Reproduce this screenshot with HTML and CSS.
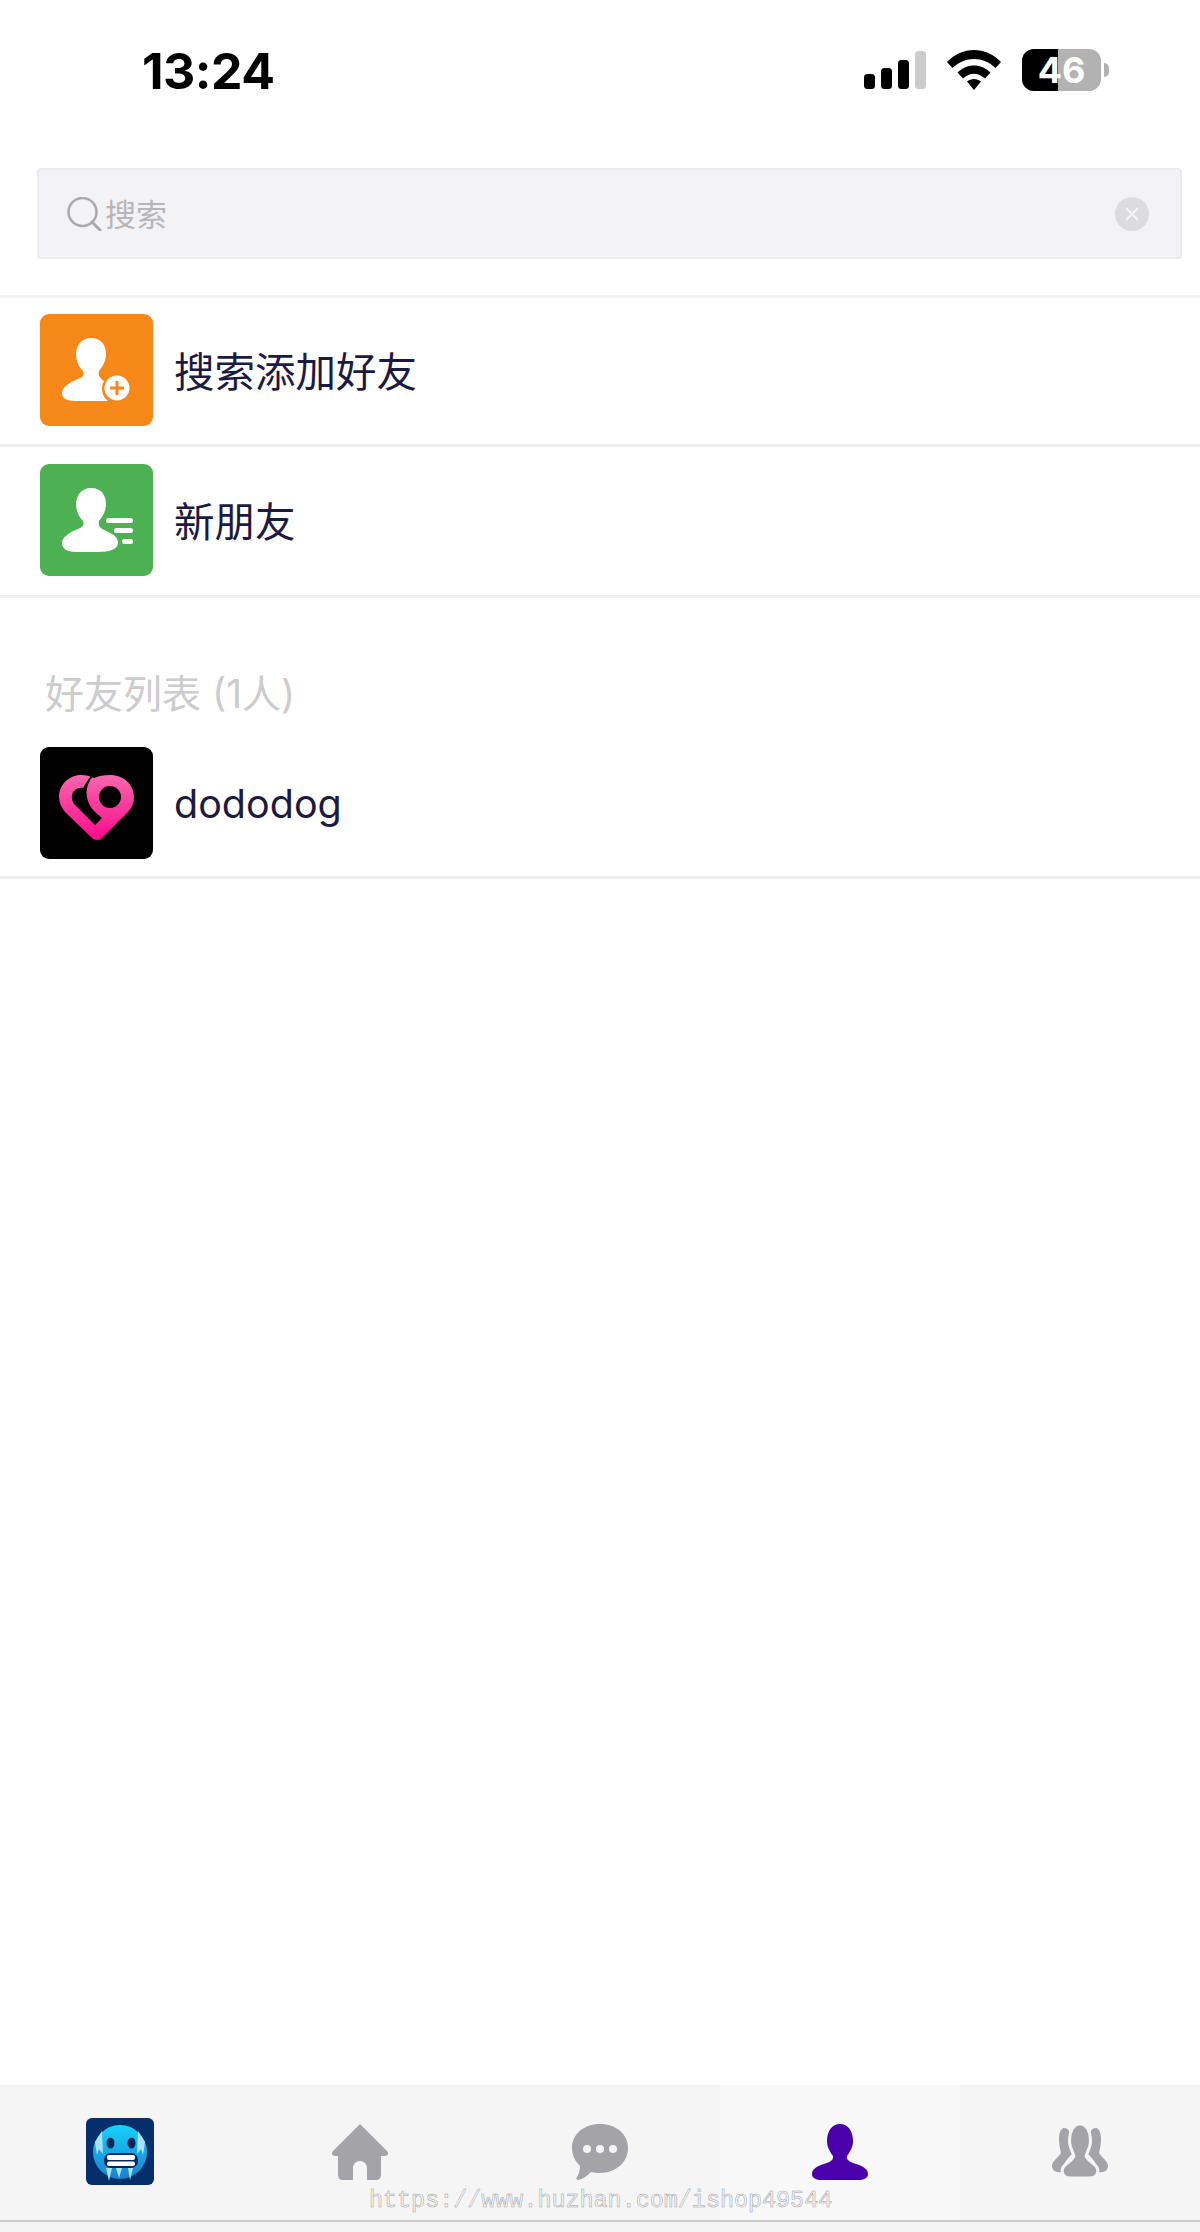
FILE: index.html
```html
<!DOCTYPE html>
<html lang="zh-CN">
<head>
  <meta charset="UTF-8" />
  <meta name="viewport" content="width=device-width, initial-scale=1.0"/>
  <title>好友</title>
  <link rel="stylesheet" href="styles.css">
</head>
<body>
  <div class="page">
    <!-- status bar -->
    <div class="status-bar">
      <div class="time">13:24</div>
      <div class="status-icons">
        <svg class="signal" width="62" height="38" viewBox="0 0 62 38">
          <rect x="0" y="23" width="11" height="15" rx="3.5" fill="#000"/>
          <rect x="17" y="17" width="11" height="21" rx="3.5" fill="#000"/>
          <rect x="34" y="9" width="11" height="29" rx="3.5" fill="#000"/>
          <rect x="51" y="0" width="11" height="38" rx="3.5" fill="#cbcbcb"/>
        </svg>
        <svg class="wifi" width="54" height="40" viewBox="0 0 54 40">
          <path d="M0 12 C15 -4 39 -4 54 12 L48.500 18 C36 6 18 6 5.500 18 Z" fill="#000"/>
          <path d="M10.500 22.500 C20 13 34 13 43.500 22.500 L38 28.500 C31 22 23 22 16 28.500 Z" fill="#000"/>
          <path d="M20 31.500 C24 28 30 28 34 31.500 L27 40 Z" fill="#000"/>
        </svg>
        <div class="battery">
          <div class="battery-body">
            <div class="battery-fill"></div>
            <span class="battery-num">46</span>
          </div>
          <div class="battery-nub"></div>
        </div>
      </div>
    </div>

    <!-- search -->
    <div class="search-wrap">
      <div class="search-box">
        <svg class="search-icon" width="35" height="34" viewBox="0 0 35 34">
          <circle cx="15.500" cy="15" r="14" fill="none" stroke="#a9a9ac" stroke-width="2.500"/>
          <path d="M25 25 L33 33" stroke="#a9a9ac" stroke-width="3" stroke-linecap="round"/>
        </svg>
        <span class="search-text">搜索</span>
        <svg class="clear-icon" width="34" height="34" viewBox="0 0 34 34">
          <circle cx="17" cy="17" r="17" fill="#dcdcde"/>
          <path d="M11 11 L23 23 M23 11 L11 23" stroke="#f4f4f5" stroke-width="2"/>
        </svg>
      </div>
    </div>

    <!-- fixed rows -->
    <div class="row row-first">
      <div class="avatar avatar-orange">
        <svg width="113" height="112" viewBox="0 0 113 112">
          <path d="M51 24 C62 24 66 32 66 40 C66 48 62 53 59 57 C58 62 60 64 64 67 C60 74 62 82 68 87 L36 87 C26 87 22 84 22 79 C22 73 30 68 38 65 C44 63 44 60 43 57 C39 53 36 47 36 40 C36 32 41 24 51 24 Z" fill="#fff"/>
          <circle cx="77" cy="74" r="12.500" fill="#fff"/>
          <path d="M77 67 L77 81 M70 74 L84 74" stroke="#f58819" stroke-width="3"/>
        </svg>
      </div>
      <span class="row-name">搜索添加好友</span>
    </div>
    <div class="row">
      <div class="avatar avatar-green">
        <svg width="113" height="113" viewBox="0 0 113 113">
          <path d="M51 24 C62 24 66 32 66 40 C66 48 62 53 59 57 C58 62 60 64 66 67 C74 70 78 74 78 79 C78 85 70 88 58 88 L36 88 C26 88 22 84 22 79 C22 73 30 68 38 65 C44 63 44 60 43 57 C39 53 36 47 36 40 C36 32 41 24 51 24 Z" fill="#fff"/>
          <rect x="66" y="54" width="27" height="5" rx="2.500" fill="#fff"/>
          <rect x="74" y="64" width="19" height="5" rx="2.500" fill="#fff"/>
          <rect x="82" y="75" width="11" height="5" rx="2.500" fill="#fff"/>
        </svg>
      </div>
      <span class="row-name">新朋友</span>
    </div>

    <div class="section-title">好友列表 (1人)</div>

    <div class="row row-friend">
      <div class="avatar avatar-black">
        <svg width="113" height="112" viewBox="0 0 113 112">
          <defs>
            <linearGradient id="heart" x1="0" y1="0" x2="0" y2="1">
              <stop offset="0" stop-color="#fb66ae"/>
              <stop offset="1" stop-color="#fb0a8a"/>
            </linearGradient>
          </defs>
          <path d="M57 93 C54.500 93 52.500 92 51 90 L25 65 C21 60 19 55 19 50 C19 38 29 28 41 28 C46 28 50 29 54 31 C58 29 64 28 70 28 C84 28 94 38 94 50 C94 56 92 61 88 65 L63 90 C61.500 92 59.500 93 57 93 Z" fill="url(#heart)"/>
          <path d="M55 27 C50 32 47 38 46.500 45 C46.500 53 50 60 55 65 L62 71 L55 78 L35 58 C31 54 31 47 34 44 C37 41 40 40.500 43 41 C45 37 48 33 52 27 Z" fill="#000"/>
          <circle cx="70" cy="50" r="11" fill="#000"/>
        </svg>
      </div>
      <span class="row-name row-name-latin">dododog</span>
    </div>

    <div class="spacer"></div>

    <!-- tab bar -->
    <div class="tabbar">
      <div class="tab tab-me">
        <svg width="68" height="67" viewBox="0 0 68 67">
          <defs>
            <linearGradient id="cold" x1="0" y1="0" x2="0" y2="1">
              <stop offset="0" stop-color="#17d2fb"/>
              <stop offset="1" stop-color="#1c7fce"/>
            </linearGradient>
          </defs>
          <rect width="68" height="67" rx="6" fill="#042f6b"/>
          <circle cx="34" cy="34" r="27" fill="url(#cold)"/>
          <path d="M9 24 L16 13 L17 36 L13 31 L11 37 Z M59 24 L52 13 L51 36 L55 31 L57 37 Z" fill="#a6e3f7"/>
          <ellipse cx="24.500" cy="25" rx="4" ry="5.500" fill="#04275a"/>
          <ellipse cx="45.500" cy="25" rx="4" ry="5.500" fill="#04275a"/>
          <path d="M20 50 L23 63 L26 50 L30 50 L33 60 L36 50 L42 50 L44 62 L47 50 Z" fill="#a6e3f7"/>
          <rect x="18" y="35" width="34" height="15" rx="7" fill="#04275a"/>
          <rect x="21" y="37" width="28" height="5" rx="2" fill="#fff"/>
          <rect x="21" y="43.500" width="28" height="4.500" rx="2" fill="#fff"/>
        </svg>
      </div>
      <div class="tab">
        <svg width="58" height="56" viewBox="0 0 58 56">
          <path d="M29 0 L56 27 C58 29 57 32 54 32 L50 32 L50 51 C50 54 48 56 45 56 L36 56 L36 44 C36 40 33 37 29 37 C25 37 22 40 22 44 L22 56 L12 56 C9 56 7 54 7 51 L7 32 L4 32 C1 32 0 29 2 27 Z" fill="#a3a3a8"/>
        </svg>
      </div>
      <div class="tab">
        <svg width="56" height="56" viewBox="0 0 56 56">
          <path d="M28 0 C44 0 56 10 56 24 C56 38 44 49 28 49 C25 49 22 48.500 19 48 C15 52 11 55 6 56 C4 56 4 54 5 53 C7 50 8 46 8 42 C3 37 0 31 0 24 C0 10 12 0 28 0 Z" fill="#a3a3a8"/>
          <circle cx="15" cy="25" r="4" fill="#f5f5f6"/>
          <circle cx="28" cy="25" r="4" fill="#f5f5f6"/>
          <circle cx="41" cy="25" r="4" fill="#f5f5f6"/>
        </svg>
      </div>
      <div class="tab tab-active">
        <svg width="56" height="56" viewBox="0 0 56 56">
          <path d="M28 0 C36 0 41 7 41 17 C41 24 37 29 35 32 C34 36 38 38 44 40 C51 42 56 45 56 50 C56 54 52 56 46 56 L10 56 C4 56 0 54 0 50 C0 45 5 42 12 40 C18 38 22 36 21 32 C19 29 15 24 15 17 C15 7 20 0 28 0 Z" fill="#4a00aa"/>
        </svg>
      </div>
      <div class="tab">
        <svg width="56" height="56" viewBox="0 0 56 56">
          <path d="M12 4 C16 4 18 7 18 12 L20 30 C14 36 10 42 9 48 C4 49 0 46 0 42 C0 37 6 34 9 29 C8 25 7 20 7 15 C7 9 9 4 12 4 Z M44 4 C40 4 38 7 38 12 L36 30 C42 36 46 42 47 48 C52 49 56 46 56 42 C56 37 50 34 47 29 C48 25 49 20 49 15 C49 9 47 4 44 4 Z" fill="#a3a3a8"/>
          <path d="M28 0 C35 0 38.500 8 38.500 17 C38.500 24 35 28 34 32 C35 36 40 38 44 42 C48 47 45 54 38 54 L18 54 C11 54 8 47 12 42 C16 38 21 36 22 32 C21 28 17.500 24 17.500 17 C17.500 8 21 0 28 0 Z" fill="#a3a3a8" stroke="#f5f5f6" stroke-width="3"/>
        </svg>
      </div>
      <div class="watermark">https://www.huzhan.com/ishop49544</div>
    </div>
    <div class="bottom-strip"></div>
  </div>
</body>
</html>
```

FILE: styles.css
```css
body {
  margin: 0;
  padding: 0;
  background-color: white;
  font-family: "Inter", "Noto Sans CJK SC", sans-serif;
}

.page {
  display: flex;
  flex-direction: column;
  height: 2232px;
  overflow: hidden;
}

/* status bar */
.status-bar {
  display: flex;
  justify-content: space-between;
  align-items: center;
  height: 140px;
  padding: 0 91px 0 142px;
  flex-shrink: 0;
  box-sizing: border-box;
}

.time {
  padding-top: 2px;
  font-family: "Inter", sans-serif;
  font-size: 50px;
  font-weight: 700;
  line-height: 44px;
  letter-spacing: -0.5px;
  color: #000;
}

.status-icons {
  display: flex;
  align-items: center;
}

.signal {
  margin-right: 21px;
}

.wifi {
  margin-right: 21px;
}

.battery {
  display: flex;
  align-items: center;
}

.battery-body {
  position: relative;
  width: 79px;
  height: 42px;
  border-radius: 12px;
  background-color: #b2b2b2;
  overflow: hidden;
  display: flex;
  align-items: center;
  justify-content: center;
}

.battery-fill {
  position: absolute;
  left: 0;
  top: 0;
  bottom: 0;
  width: 46%;
  background-color: #000;
}

.battery-num {
  position: relative;
  font-size: 36px;
  font-weight: 700;
  color: #fff;
}

.battery-nub {
  width: 5px;
  height: 14px;
  margin-left: 3px;
  background-color: #b2b2b2;
  border-radius: 0 7px 7px 0;
}

/* search */
.search-wrap {
  padding: 28px 18px 36px 37px;
  flex-shrink: 0;
  border-bottom: 3px solid #f4f4f5;
}

.search-box {
  display: flex;
  align-items: center;
  height: 91px;
  padding: 0 31px 0 28px;
  box-sizing: border-box;
  background-color: #f3f3f5;
  border: 2px solid #ebebed;
  border-radius: 4px;
}

.search-text {
  flex: 1;
  margin-left: 3px;
  padding-bottom: 2px;
  font-size: 31px;
  color: #b6b6b9;
}

/* rows */
.row {
  display: flex;
  align-items: center;
  height: 151px;
  padding: 0 0 2px 40px;
  box-sizing: border-box;
  border-bottom: 3px solid #efeff0;
  flex-shrink: 0;
}

.row-first {
  height: 149px;
}

.row-friend {
  height: 132px;
  padding-bottom: 18px;
}

.avatar {
  width: 113px;
  height: 112px;
  border-radius: 9px;
  overflow: hidden;
  flex-shrink: 0;
}

.avatar svg {
  display: block;
}

.avatar-orange {
  background-color: #f58819;
}

.avatar-green {
  background-color: #4db052;
}

.avatar-black {
  background-color: #000;
}

.row-name {
  margin-left: 21px;
  padding-bottom: 2px;
  font-size: 40.500px;
  color: #1d1a3f;
}

.row-name-latin {
  font-size: 39.500px;
  padding-top: 2px;
  padding-bottom: 0;
}

.section-title {
  padding: 70px 0 27px 45px;
  font-size: 39px;
  line-height: 52px;
  color: #cccccc;
  flex-shrink: 0;
}

.spacer {
  flex: 1;
}

/* tab bar */
.tabbar {
  position: relative;
  display: grid;
  grid-template-columns: repeat(5, 1fr);
  height: 135px;
  background-color: #f5f5f6;
  border-bottom: 2px solid #c9c9cb;
  flex-shrink: 0;
}

.tab {
  display: flex;
  align-items: flex-start;
  justify-content: center;
  padding-top: 39px;
}

.tab-me {
  padding-top: 33px;
}

.tab-active {
  background-color: #f8f8f9;
}

.watermark {
  position: absolute;
  left: 369px;
  top: 101px;
  font-family: "Liberation Mono", monospace;
  font-size: 23.400px;
  line-height: 30px;
  color: #f5f5f6;
  -webkit-text-stroke: 0.5px #a0a0a2;
  white-space: nowrap;
}

.bottom-strip {
  height: 10px;
  background-color: #f3f3f3;
  flex-shrink: 0;
}
```
